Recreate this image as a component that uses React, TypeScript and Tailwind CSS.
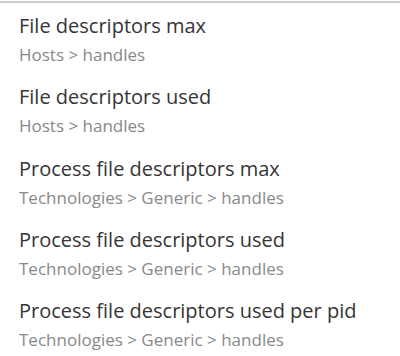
import React from 'react';

const items = [
  { title: 'File descriptors max', path: 'Hosts > handles' },
  { title: 'File descriptors used', path: 'Hosts > handles' },
  { title: 'Process file descriptors max', path: 'Technologies > Generic > handles' },
  { title: 'Process file descriptors used', path: 'Technologies > Generic > handles' },
  { title: 'Process file descriptors used per pid', path: 'Technologies > Generic > handles' },
];

export default function App() {
  return (
    <div className="w-[400px] h-[356px] bg-white overflow-hidden" style={{ fontFamily: '"Open Sans", sans-serif' }}>
      <div className="mt-[1px] h-full border-t-2 border-[#cccccc]">
        <ul className="pt-[1px]">
          {items.map((item) => (
            <li key={item.title} className="h-[71.25px] px-[19px] pt-[9px] cursor-pointer">
              <div className="text-[20px] leading-[26px] text-[#353535]">{item.title}</div>
              <div className="mt-[5px] text-[17px] leading-[22px] text-[#898989]">{item.path}</div>
            </li>
          ))}
        </ul>
      </div>
    </div>
  );
}
